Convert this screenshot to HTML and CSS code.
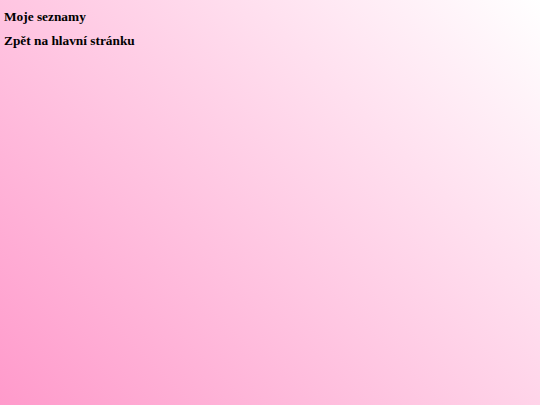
FILE: index.html
```html
<!DOCTYPE html>
<html lang="cs">
<head>
<meta charset="utf-8">
<title>Moje seznamy</title>
<link rel="stylesheet" href="styles.css">
</head>
<body>
<div class="page">
  <h1 class="title">Moje seznamy</h1>
  <a class="back" href="#">Zpět na hlavní stránku</a>
</div>
</body>
</html>
```
FILE: styles.css
```css
html, body {
  margin: 0;
  height: 100%;
}
body {
  background: linear-gradient(45deg, #ff9acb 0%, #ffffff 100%);
  font-family: "Liberation Serif", "Times New Roman", serif;
  color: #000;
}
.page {
  display: flex;
  flex-direction: column;
  align-items: flex-start;
  gap: 9px;
  padding: 9px 4px;
}
.title, .back {
  margin: 0;
  font-size: 13.33px;
  font-weight: bold;
  line-height: 15px;
  color: #000;
  text-decoration: none;
}
```
